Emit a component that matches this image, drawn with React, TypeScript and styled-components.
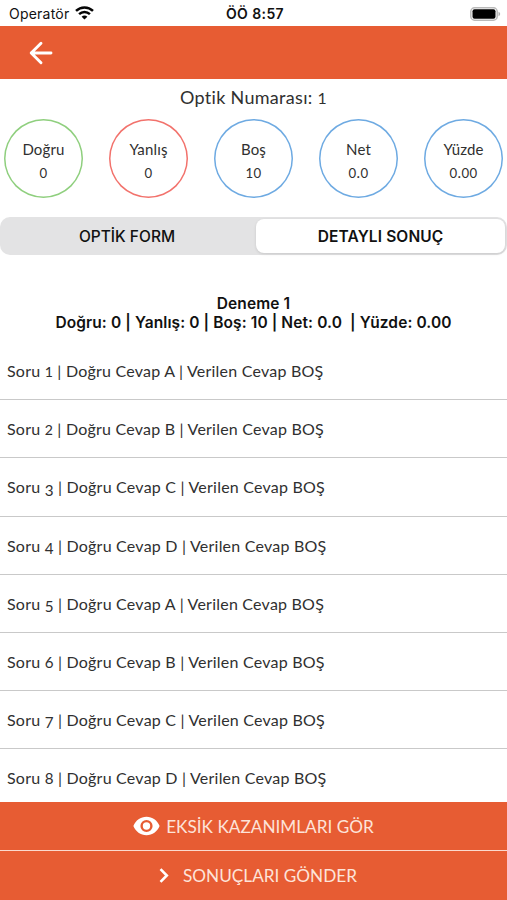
import React from "react";
import styled, { createGlobalStyle } from "styled-components";

const ORANGE = "#e75c33";

const GlobalStyle = createGlobalStyle`
  * { box-sizing: border-box; }
  body { margin: 0; background: #fff; }
`;

const Screen = styled.div`
  width: 507px;
  height: 900px;
  display: flex;
  flex-direction: column;
  overflow: hidden;
  background: #fff;
  color: #303030;
  font-family: Lato, "Open Sans", sans-serif;
`;

const StatusBar = styled.div`
  flex: none;
  height: 26px;
  padding: 1px 6px 0 9px;
  display: grid;
  grid-template-columns: 1fr auto 1fr;
  align-items: center;
  font-family: Inter, sans-serif;
  color: #111;
`;

const Carrier = styled.div`
  display: flex;
  align-items: center;
  gap: 6px;
  font-size: 14px;
  letter-spacing: 0.22px;
  svg { margin-top: -2px; }
`;

const Clock = styled.div`
  font-size: 14px;
  font-weight: 600;
  letter-spacing: 0.4px;
`;

const Power = styled.div`
  display: flex;
  justify-content: flex-end;
`;

const NavBar = styled.div`
  flex: none;
  height: 53px;
  padding-left: 29px;
  display: flex;
  align-items: center;
  background: ${ORANGE};
`;

const Title = styled.div`
  flex: none;
  height: 39px;
  line-height: 36px;
  text-align: center;
  font-size: 18px;
  letter-spacing: 0.3px;
  white-space: pre;
`;

const Scores = styled.div`
  flex: none;
  display: flex;
  justify-content: space-between;
  padding: 1px 4px 0;
`;

const Score = styled.div<{ $color: string }>`
  width: 79px;
  height: 79px;
  box-shadow: inset 0 0 0 1.5px ${(p) => p.$color};
  border-radius: 50%;
  display: flex;
  flex-direction: column;
  align-items: center;
  padding-top: 18px;
  font-size: 15px;
  letter-spacing: 0.15px;
  line-height: 24px;
`;

const Segments = styled.div`
  flex: none;
  height: 38px;
  margin-top: 19px;
  padding: 2px;
  display: grid;
  grid-template-columns: 254px 249px;
  border-radius: 10px;
  background: #e3e3e4;
`;

const Segment = styled.div<{ $active?: boolean }>`
  display: flex;
  align-items: center;
  justify-content: center;
  padding: ${(p) => (p.$active ? "1px 0 0" : "1px 4px 0 0")};
  border-radius: 8px;
  background: ${(p) => (p.$active ? "#fff" : "transparent")};
  box-shadow: ${(p) => (p.$active ? "0 1px 3px rgba(0,0,0,.12)" : "none")};
  color: #111;
  font-family: Inter, sans-serif;
  font-size: 15.5px;
  letter-spacing: ${(p) => (p.$active ? "0.12px" : "0")};
  font-weight: ${(p) => (p.$active ? 600 : 500)};
`;

const Summary = styled.div`
  flex: none;
  height: 87px;
  padding-top: 39px;
  text-align: center;
  white-space: pre;
  color: #111;
  font: 600 15.5px/19px Inter, sans-serif;
  letter-spacing: 0.1px;
`;

const List = styled.div`
  flex: 1;
  min-height: 0;
  overflow: hidden;
`;

const Row = styled.div`
  height: 58.2px;
  padding: 0 7px 0;
  display: flex;
  align-items: center;
  border-bottom: 1px solid #c9c9c9;
  font-size: 16px;
  letter-spacing: 0.22px;
  white-space: pre;
`;

const Footer = styled.div`
  flex: none;
  height: 98px;
  display: grid;
  grid-template-rows: 49px 49px;
  background: ${ORANGE};
`;

const Action = styled.div<{ $gap: number; $indent?: number; $ruled?: boolean }>`
  display: flex;
  align-items: center;
  justify-content: center;
  gap: ${(p) => p.$gap}px;
  padding-left: ${(p) => p.$indent ?? 0}px;
  border-bottom: ${(p) => (p.$ruled ? "1px solid #fbd9cd" : "none")};
  color: #fde3d9;
  font-size: 17.2px;
  white-space: pre;
`;

const OldDigit = styled.span<{ $kind: "low" | "drop" | "tall" }>`
  font-size: ${(p) => (p.$kind === "low" ? "0.88em" : "0.95em")};
  position: relative;
  top: ${(p) => (p.$kind === "drop" ? "0.14em" : "0")};
`;

const Value = styled.span`
  margin-top: -1px;
  letter-spacing: 0.4px;
`;

/** Sets numerals in old-style proportions inside running text. */
function Figures({ text }: { text: string }) {
  return (
    <span>
      {text.split(/(\d)/).map((part, i) => {
        if (!/^\d$/.test(part)) return part;
        const kind = "012".includes(part) ? "low" : "68".includes(part) ? "tall" : "drop";
        return <OldDigit key={i} $kind={kind}>{part}</OldDigit>;
      })}
    </span>
  );
}

const WifiIcon = () => (
  <svg width="19" height="14" viewBox="0 0 19 14" fill="none" stroke="#050505" strokeWidth="2.5">
    <path d="M1 4.9C5.8.3 13.2.3 18 4.9" />
    <path d="M4.1 8.2c3.1-2.9 7.7-2.9 10.8 0" />
    <path d="M9.5 13.6 6.6 10.7c1.6-1.5 4.2-1.5 5.8 0z" fill="#050505" stroke="none" />
  </svg>
);

const BatteryIcon = () => (
  <svg width="31" height="14" viewBox="0 0 31 14">
    <rect x=".8" y=".8" width="26.4" height="12.4" rx="3.8" fill="#fff" stroke="#b9b9b9" strokeWidth="1.5" />
    <rect x="2.5" y="2.3" width="23" height="9.4" rx="2" fill="#000" />
    <path d="M28.5 4.8c2.2.8 2.2 3.6 0 4.4z" fill="#b0b0b0" />
  </svg>
);

const BackIcon = () => (
  <svg width="24" height="24" viewBox="0 0 24 24" fill="none" stroke="#fff" strokeWidth="2.9" strokeLinecap="round" strokeLinejoin="round">
    <path d="M22 12H2.200M12 2.200 2.200 12 12 21.800" />
  </svg>
);

const EyeIcon = () => (
  <svg width="27" height="20" viewBox="0 0 27 20">
    <path fill="#fff" fillRule="evenodd" d="M13.5.8C7.6.8 2.6 4.5.4 10c2.2 5.500 7.200 9.200 13.100 9.200S24.400 15.500 26.600 10C24.400 4.500 19.400.8 13.500.8zm0 15.300a6.100 6.100 0 1 1 0-12.200 6.100 6.100 0 0 1 0 12.200zm0-2.400a3.700 3.700 0 1 0 0-7.400 3.700 3.700 0 0 0 0 7.400z" />
  </svg>
);

const ChevronIcon = () => (
  <svg width="10" height="15" viewBox="0 0 10 15" fill="none" stroke="#fff" strokeWidth="2.6">
    <path d="m1.500 1.200 6.300 6.300-6.300 6.300" />
  </svg>
);

const scores = [
  { label: "Doğru", value: "0", color: "#8fcf7e" },
  { label: "Yanlış", value: "0", color: "#f2726c" },
  { label: "Boş", value: "10", color: "#6eaae2" },
  { label: "Net", value: "0.0", color: "#6eaae2" },
  { label: "Yüzde", value: "0.00", color: "#6eaae2" },
];

const answers = ["A", "B", "C", "D", "A", "B", "C", "D"];

export default function App() {
  return (
    <>
      <GlobalStyle />
      <Screen>
        <StatusBar>
          <Carrier>Operatör <WifiIcon /></Carrier>
          <Clock>ÖÖ 8:57</Clock>
          <Power><BatteryIcon /></Power>
        </StatusBar>
        <NavBar><BackIcon /></NavBar>
        <Title><Figures text="Optik Numarası: 1" /></Title>
        <Scores>
          {scores.map((s) => (
            <Score key={s.label} $color={s.color}>
              <span>{s.label}</span>
              <Value><Figures text={s.value} /></Value>
            </Score>
          ))}
        </Scores>
        <Segments>
          <Segment>OPTİK FORM</Segment>
          <Segment $active>DETAYLI SONUÇ</Segment>
        </Segments>
        <Summary>
          <div>Deneme 1</div>
          <div>{"Doğru: 0 | Yanlış: 0 | Boş: 10 | Net: 0.0  | Yüzde: 0.00"}</div>
        </Summary>
        <List>
          {answers.map((a, i) => (
            <Row key={i}>
              <Figures text={`Soru ${i + 1} | Doğru Cevap ${a} | Verilen Cevap BOŞ`} />
            </Row>
          ))}
        </List>
        <Footer>
          <Action $gap={6} $ruled><EyeIcon />EKSİK KAZANIMLARI GÖR</Action>
          <Action $gap={14} $indent={9}><ChevronIcon />SONUÇLARI GÖNDER</Action>
        </Footer>
      </Screen>
    </>
  );
}
